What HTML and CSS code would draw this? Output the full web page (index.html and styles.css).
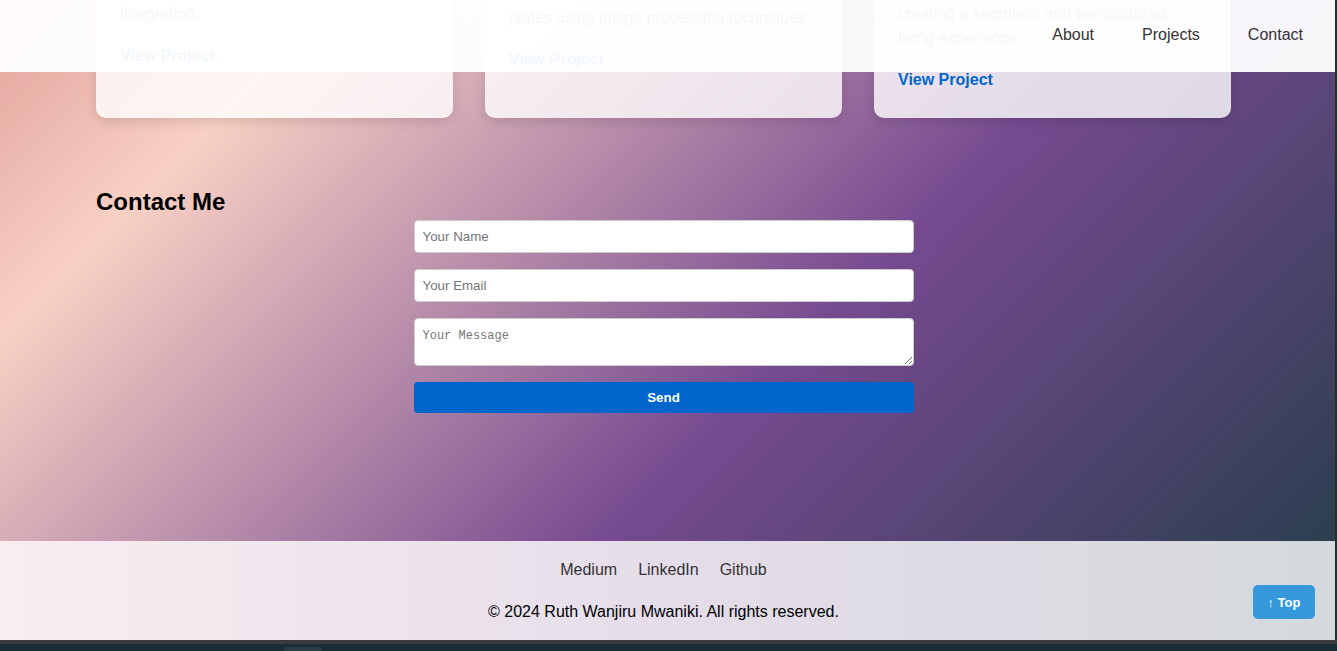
FILE: index.html
```html
<!DOCTYPE html>
<html lang="en">
<head>
<meta charset="utf-8">
<title>Ruth Wanjiru Mwaniki - Portfolio</title>
<link rel="stylesheet" href="styles.css">
</head>
<body>
<div class="screen">
  <div class="viewport">
    <header class="site-header">
      <nav class="nav">
        <a href="#about">About</a>
        <a href="#projects">Projects</a>
        <a href="#contact">Contact</a>
      </nav>
    </header>

    <main class="main">
      <section class="projects" id="projects">
        <div class="cards">
          <article class="card">
            <h3>Weather Dashboard</h3>
            <p>A responsive weather dashboard with real-time forecasts and map<br>integration.</p>
            <a class="card-link" href="#">View Project</a>
          </article>
          <article class="card card-tall-title">
            <h3>License Plate Recognition</h3>
            <p>A computer vision system that detects and reads vehicle license number<br>plates using image processing techniques.</p>
            <a class="card-link" href="#">View Project</a>
          </article>
          <article class="card">
            <h3>Smart Home Automation</h3>
            <p>A smart home system that automates lighting, temperature and security,<br>creating a seamless and personalized living experience.</p>
            <a class="card-link" href="#">View Project</a>
          </article>
        </div>
      </section>

      <section class="contact" id="contact">
        <h2>Contact Me</h2>
        <form class="contact-form">
          <input type="text" placeholder="Your Name">
          <input type="email" placeholder="Your Email">
          <textarea placeholder="Your Message"></textarea>
          <button type="button">Send</button>
        </form>
      </section>
    </main>

    <footer class="footer">
      <div class="footer-links">
        <a href="#">Medium</a>
        <a href="#">LinkedIn</a>
        <a href="#">Github</a>
      </div>
      <p class="copyright">© 2024 Ruth Wanjiru Mwaniki. All rights reserved.</p>
    </footer>

    <a class="top-btn" href="#">↑ Top</a>
  </div>
  <div class="edge"></div>
</div>
<div class="taskbar"><span class="task-item"></span></div>
</body>
</html>
```

FILE: styles.css
```css
* {
  box-sizing: border-box;
}

html, body {
  margin: 0;
  padding: 0;
}

body {
  width: 1337px;
  height: 651px;
  overflow: hidden;
  background: #1b2c37;
  font-family: "Liberation Sans", Arial, sans-serif;
  color: #333;
}

.screen {
  display: flex;
  height: 640px;
}

.viewport {
  position: relative;
  width: 1335px;
  height: 640px;
  overflow: hidden;
  display: flex;
  flex-direction: column;
}

.edge {
  width: 2px;
  background: #2a2a2a;
}

/* Header */
.site-header {
  position: absolute;
  top: 0;
  left: 0;
  right: 0;
  height: 72px;
  background: rgba(255, 255, 255, 0.95);
  z-index: 10;
  display: flex;
  justify-content: flex-end;
  align-items: flex-start;
  padding: 26px 32px 0 0;
}

.nav {
  display: flex;
  gap: 48px;
}

.nav a {
  color: #333;
  text-decoration: none;
  font-size: 16px;
  line-height: 18px;
}

/* Main */
.main {
  flex: 1;
  overflow: hidden;
  background: linear-gradient(135deg, #e0a29b 0%, #f9d0c4 18%, #764a90 61%, #2c3e50 100%);
}

.projects {
  padding: 0 104px 0 96px;
}

.cards {
  margin-top: -106px;
  display: grid;
  grid-template-columns: repeat(3, 1fr);
  gap: 32px;
}

.card {
  background: rgba(255, 255, 255, 0.8);
  border-radius: 10px;
  box-shadow: 0 4px 12px rgba(0, 0, 0, 0.12);
  padding: 24px 24px 26px;
}

.card h3 {
  margin: 0 0 12px;
  font-size: 20px;
  line-height: 24px;
  color: #333;
}

.card-tall-title h3 {
  margin-bottom: 16px;
}

.card p {
  margin: 0;
  font-size: 16px;
  line-height: 24px;
  color: #555;
}

.card-link {
  display: block;
  margin-top: 18px;
  font-size: 16px;
  line-height: 24px;
  font-weight: bold;
  color: #0066cc;
  text-decoration: none;
}

/* Contact */
.contact {
  padding: 70px 104px 0 96px;
}

.contact h2 {
  margin: 0 0 4px;
  font-size: 24px;
  line-height: 28px;
  font-weight: bold;
  color: #000;
}

.contact-form {
  width: 500px;
  margin: 0 auto;
}

.contact-form input,
.contact-form textarea {
  display: block;
  width: 100%;
  margin: 0 0 16px;
  padding: 8px;
  border: 1px solid #ccc;
  border-radius: 4px;
  background: #fff;
  color: #333;
}

.contact-form input {
  font-family: "Liberation Sans", Arial, sans-serif;
  font-size: 13.33px;
  height: 33px;
}

.contact-form textarea {
  font-family: "Liberation Mono", "DejaVu Sans Mono", monospace;
  font-size: 12px;
  line-height: 16px;
  height: 48px;
  padding: 9px 8px 7px;
  resize: vertical;
}

.contact-form input::placeholder {
  color: #757575;
}

.contact-form textarea::placeholder {
  color: #757575;
}

.contact-form button {
  display: block;
  width: 100%;
  height: 31px;
  border: none;
  border-radius: 4px;
  background: #0066cc;
  color: #fff;
  font-family: "Liberation Sans", Arial, sans-serif;
  font-size: 13.33px;
  font-weight: bold;
}

/* Footer */
.footer {
  height: 99px;
  padding: 20px 8px 19px 0;
  background: linear-gradient(90deg, #f8eef1 0%, #e5dde9 50%, #d4d9dd 100%);
  text-align: center;
}

.footer-links {
  display: flex;
  justify-content: center;
  gap: 21px;
}

.footer-links a {
  color: #333;
  text-decoration: none;
  font-size: 16px;
  line-height: 18px;
}

.copyright {
  margin: 24px 0 0;
  font-size: 16px;
  line-height: 18px;
  color: #000;
}

/* Back to top */
.top-btn {
  position: absolute;
  right: 20px;
  bottom: 21px;
  width: 62px;
  height: 34px;
  border-radius: 5px;
  background: #3498db;
  color: #fff;
  font-size: 13px;
  font-weight: bold;
  text-decoration: none;
  display: flex;
  align-items: center;
  justify-content: center;
  z-index: 10;
}

/* Taskbar strip */
.taskbar {
  height: 11px;
  border-top: 4px solid #3a3a3a;
  background: #1b2c37;
  padding-left: 284px;
}

.task-item {
  display: block;
  width: 38px;
  height: 7px;
  margin-top: 3px;
  border-radius: 3px 3px 0 0;
  background: #2b3c47;
}
```
